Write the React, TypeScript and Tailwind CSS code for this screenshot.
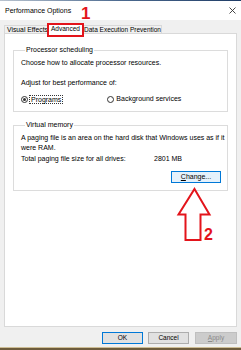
import React from "react";

const FONT = { fontFamily: '"Liberation Sans", Arial, sans-serif' };

function Radio({ checked }: { checked?: boolean }) {
  return (
    <span className="w-[7px] h-[7px] rounded-full border border-[#333333] bg-white flex items-center justify-center shrink-0">
      {checked && <span className="w-[3px] h-[3px] rounded-full bg-[#333333]" />}
    </span>
  );
}

export default function App() {
  return (
    <div
      className="relative w-[241px] h-[350px] overflow-hidden bg-[#f0f0f0] text-black flex flex-col text-[7px] leading-[10px]"
      style={FONT}
    >
      {/* top edge */}
      <div className="h-[1px] bg-gradient-to-r from-[#b9c3cf] via-[#4c6a8f] to-[#1f3c66] shrink-0" />
      {/* title bar */}
      <div className="h-[19px] bg-white flex items-center justify-between pl-[5px] pr-[5px] shrink-0">
        <span className="text-[7px]">Performance Options</span>
        <svg width="7" height="7" viewBox="0 0 7 7">
          <path d="M0.5 0.5 L6.5 6.5 M6.5 0.5 L0.5 6.5" stroke="#333" strokeWidth="0.9" />
        </svg>
      </div>
      {/* tabs */}
      <div className="h-[13px] flex items-end pl-[4px] shrink-0 text-[6.5px] leading-[8px]">
        <div className="w-[43px] h-[8px] border-t border-l border-[#d9d9d9] bg-[#f0f0f0] flex items-center justify-start pl-[2px] whitespace-nowrap text-[6.8px]">
          Visual Effects
        </div>
        <div className="relative z-10 w-[37px] h-[11px] -mb-[1px] border-t border-l border-r border-[#d9d9d9] bg-white flex items-center justify-center whitespace-nowrap">
          Advanced
        </div>
        <div className="w-[78px] h-[8px] border-t border-r border-[#d9d9d9] bg-[#f0f0f0] flex items-center justify-center whitespace-nowrap">
          Data Execution Prevention
        </div>
      </div>
      {/* panel */}
      <div className="h-[294px] mx-[4px] border border-[#d9d9d9] bg-white shrink-0 flex flex-col">
        <fieldset className="mt-[11px] mx-[8px] border border-[#dcdcdc] pl-[7px] pt-[3px] pb-[7px]">
          <legend className="ml-[4px] px-[1px] leading-[10px]">Processor scheduling</legend>
          <div>Choose how to allocate processor resources.</div>
          <div className="mt-[10px]">Adjust for best performance of:</div>
          <div className="mt-[6px] flex items-center h-[10px]">
            <Radio checked />
            <span className="ml-[1px] border border-dotted border-[#333] leading-[7px] px-[1px] py-[0px]">Programs</span>
            <span className="ml-[44px]"><Radio /></span>
            <span className="ml-[2px]">Background services</span>
          </div>
        </fieldset>
        <fieldset className="mt-[8px] mx-[8px] border border-[#dcdcdc] pl-[7px] pr-[1px] pt-[3px] pb-[7px]">
          <legend className="ml-[4px] px-[1px] leading-[10px]">Virtual memory</legend>
          <div>A paging file is an area on the hard disk that Windows uses as if it were RAM.</div>
          <div className="mt-[1px] flex">
            <span className="w-[133px]">Total paging file size for all drives:</span>
            <span>2801 MB</span>
          </div>
          <div className="mt-[7px] flex justify-end pr-[5px]">
            <div className="w-[50px] h-[12px] border border-[#0078d7] bg-[#e5f1fb] flex items-center justify-center leading-[10px]">
              <span><span className="underline">C</span>hange...</span>
            </div>
          </div>
        </fieldset>
      </div>
      {/* buttons */}
      <div className="mt-[5px] h-[12px] flex justify-end pr-[4px] shrink-0 text-[6.5px]">
        <div className="w-[41px] h-[12px] border border-[#0078d7] bg-[#e1e1e1] flex items-center justify-center mr-[5px]">OK</div>
        <div className="w-[41px] h-[12px] border border-[#adadad] bg-[#e1e1e1] flex items-center justify-center mr-[6px]">Cancel</div>
        <div className="w-[42px] h-[12px] border border-[#bfbfbf] bg-[#cccccc] text-[#8a8a8a] flex items-center justify-center">
          <span><span className="underline">A</span>pply</span>
        </div>
      </div>
      {/* bottom edge */}
      <div className="mt-[3px] h-[3px] border-t border-[#cdbd95] bg-[#6e5c3c] shrink-0" />

      {/* annotations */}
      <div className="absolute left-[47px] top-[23px] w-[37px] h-[14px] border-2 border-[#e3141b] z-20" />
      <div className="absolute left-[81px] top-[5px] text-[17px] leading-[17px] font-bold text-[#e3141b] z-20">1</div>
      <svg className="absolute left-[176px] top-[187px] z-20" width="36" height="56" viewBox="0 0 36 56">
        <polygon
          points="18.5,2 33.5,27.5 24.5,27.5 24.5,53 9.5,53 9.5,27.5 2.5,27.5"
          fill="white"
          stroke="#e3141b"
          strokeWidth="2"
        />
      </svg>
      <div className="absolute left-[204px] top-[227px] text-[16px] leading-[16px] font-bold text-[#e3141b] z-20">2</div>
    </div>
  );
}
